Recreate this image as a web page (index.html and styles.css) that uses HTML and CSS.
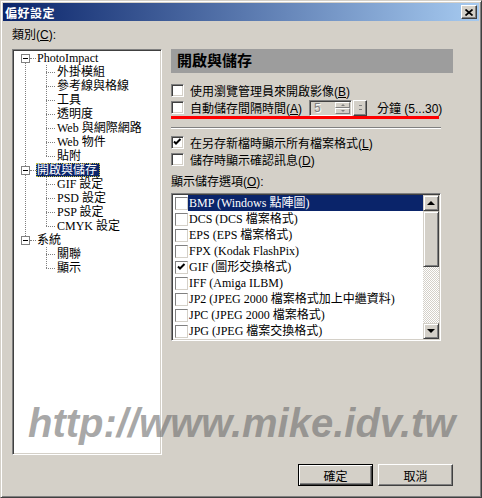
FILE: index.html
```html
<!DOCTYPE html>
<html>
<head>
    <title>偏好設定</title>
    <link rel="stylesheet" href="styles.css">
</head>
<body>
    <div class="window">
        <div class="titlebar">
            <span class="title">偏好設定</span>
            <span class="close-btn">
                <svg width="8" height="7" viewBox="0 0 8 7"><path d="M0.5 0.5L7.5 6.5M7.5 0.5L0.5 6.5" stroke="#000" stroke-width="1.7"/></svg>
            </span>
        </div>

        <div class="dialog-body">
            <div class="field-label">類別(<u>C</u>):</div>

            <div class="main">
                <div class="tree">
                    <div class="group">
                        <div class="node"><span class="exp"></span><span class="hline"></span><span class="node-text">PhotoImpact</span></div>
                        <div class="children">
                            <div class="leaf"><span class="hline"></span><span class="leaf-text">外掛模組</span></div>
                            <div class="leaf"><span class="hline"></span><span class="leaf-text">參考線與格線</span></div>
                            <div class="leaf"><span class="hline"></span><span class="leaf-text">工具</span></div>
                            <div class="leaf"><span class="hline"></span><span class="leaf-text">透明度</span></div>
                            <div class="leaf"><span class="hline"></span><span class="leaf-text">Web 與網際網路</span></div>
                            <div class="leaf"><span class="hline"></span><span class="leaf-text">Web 物件</span></div>
                            <div class="leaf"><span class="hline"></span><span class="leaf-text">貼附</span></div>
                        </div>
                    </div>
                    <div class="group">
                        <div class="node"><span class="exp"></span><span class="hline"></span><span class="node-text selected">開啟與儲存</span></div>
                        <div class="children">
                            <div class="leaf"><span class="hline"></span><span class="leaf-text">GIF 設定</span></div>
                            <div class="leaf"><span class="hline"></span><span class="leaf-text">PSD 設定</span></div>
                            <div class="leaf"><span class="hline"></span><span class="leaf-text">PSP 設定</span></div>
                            <div class="leaf"><span class="hline"></span><span class="leaf-text">CMYK 設定</span></div>
                        </div>
                    </div>
                    <div class="group">
                        <div class="node"><span class="exp"></span><span class="hline"></span><span class="node-text">系統</span></div>
                        <div class="children">
                            <div class="leaf"><span class="hline"></span><span class="leaf-text">關聯</span></div>
                            <div class="leaf"><span class="hline"></span><span class="leaf-text">顯示</span></div>
                        </div>
                    </div>
                </div>

                <div class="panel">
                    <div class="panel-header">開啟與儲存</div>

                    <div class="opt opt-first">
                        <span class="check"></span>
                        <span>使用瀏覽管理員來開啟影像(<u>B</u>)</span>
                    </div>
                    <div class="opt opt-spin">
                        <span class="check"></span>
                        <span class="spin-label">自動儲存間隔時間(<u>A</u>)</span>
                        <span class="spin">
                            <span class="spin-val">5</span>
                            <span class="updown">
                                <span class="ud-btn"><span class="tri-up small"></span></span>
                                <span class="ud-btn"><span class="tri-down small"></span></span>
                            </span>
                        </span>
                        <span class="spin-extra"><span class="mini-mark"></span></span>
                        <span class="unit">分鐘 (5...30)</span>
                    </div>
                    <div class="redline"></div>
                    <div class="sep"></div>
                    <div class="opt opt-third">
                        <span class="check">
                            <svg width="9" height="9" viewBox="0 0 9 9"><path d="M1 3.5L3 5.5L7.5 1" fill="none" stroke="#000" stroke-width="2"/></svg>
                        </span>
                        <span>在另存新檔時顯示所有檔案格式(<u>L</u>)</span>
                    </div>
                    <div class="opt">
                        <span class="check"></span>
                        <span>儲存時顯示確認訊息(<u>D</u>)</span>
                    </div>
                    <div class="list-label">顯示儲存選項(<u>O</u>):</div>

                    <div class="list">
                        <div class="items">
                            <div class="item"><span class="lcheck"></span><span class="item-text selected">BMP (Windows 點陣圖)</span></div>
                            <div class="item"><span class="lcheck"></span><span class="item-text">DCS (DCS 檔案格式)</span></div>
                            <div class="item"><span class="lcheck"></span><span class="item-text">EPS (EPS 檔案格式)</span></div>
                            <div class="item"><span class="lcheck"></span><span class="item-text">FPX (Kodak FlashPix)</span></div>
                            <div class="item"><span class="lcheck"><svg width="9" height="9" viewBox="0 0 9 9"><path d="M1 3.5L3 5.5L7.5 1" fill="none" stroke="#000" stroke-width="2"/></svg></span><span class="item-text">GIF (圖形交換格式)</span></div>
                            <div class="item"><span class="lcheck"></span><span class="item-text">IFF (Amiga ILBM)</span></div>
                            <div class="item"><span class="lcheck"></span><span class="item-text">JP2 (JPEG 2000 檔案格式加上中繼資料)</span></div>
                            <div class="item"><span class="lcheck"></span><span class="item-text">JPC (JPEG 2000 檔案格式)</span></div>
                            <div class="item"><span class="lcheck"></span><span class="item-text">JPG (JPEG 檔案交換格式)</span></div>
                        </div>
                        <div class="scrollbar">
                            <span class="sb-btn"><span class="tri-up"></span></span>
                            <span class="thumb"></span>
                            <span class="track"></span>
                            <span class="sb-btn"><span class="tri-down"></span></span>
                        </div>
                    </div>
                </div>
            </div>

            <div class="buttons">
                <button class="btn btn-default">確定</button>
                <button class="btn">取消</button>
            </div>
        </div>

        <div class="watermark">http://www.mike.idv.tw</div>
    </div>
</body>
</html>
```

FILE: styles.css
```css
* {
    box-sizing: border-box;
}

body {
    margin: 0;
    font-family: "Liberation Sans", "Noto Sans CJK TC", sans-serif;
    font-size: 12px;
    color: #000;
}

.window {
    position: relative;
    width: 482px;
    height: 498px;
    background: #d4d0c8;
    border: 1px solid;
    border-color: #d4d0c8 #404040 #404040 #d4d0c8;
    box-shadow: inset 1px 1px #fff, inset -1px -1px #808080;
    padding: 2px;
}

/* title bar */
.titlebar {
    height: 18px;
    display: flex;
    align-items: center;
    justify-content: space-between;
    padding: 0 2px;
    background: linear-gradient(to right, #0a246a, #a6caf0);
    color: #fff;
}

.title {
    font-weight: bold;
    font-size: 12px;
    letter-spacing: 0.5px;
}

.close-btn {
    width: 16px;
    height: 14px;
    display: flex;
    align-items: center;
    justify-content: center;
    background: #d4d0c8;
    border: 1px solid;
    border-color: #fff #404040 #404040 #fff;
    box-shadow: inset -1px -1px #808080;
}

/* body */
.dialog-body {
    padding: 7px 26px 0 9px;
}

.field-label {
    height: 14px;
    line-height: 14px;
    margin-bottom: 7px;
}

.main {
    display: grid;
    grid-template-columns: 150px 282px;
    column-gap: 9px;
    height: 406px;
}

/* tree */
.tree {
    background: #fff;
    border: 1px solid;
    border-color: #808080 #fff #fff #808080;
    box-shadow: inset 1px 1px #404040, inset -1px -1px #d4d0c8;
    padding: 1px;
    font-family: "Liberation Serif", "Noto Sans CJK TC", serif;
    font-size: 12px;
}

.group {
    position: relative;
}

.group:not(:last-child)::before {
    content: '';
    position: absolute;
    left: 11px;
    top: 7px;
    bottom: -7px;
    border-left: 1px dotted #808080;
}

.node {
    display: flex;
    align-items: center;
    height: 14px;
    padding-left: 7px;
}

.exp {
    position: relative;
    z-index: 1;
    width: 9px;
    height: 9px;
    border: 1px solid #808080;
    background: #fff;
}

.exp::after {
    content: '';
    position: absolute;
    left: 1px;
    top: 3px;
    width: 5px;
    height: 1px;
    background: #000;
}

.hline {
    height: 0;
    border-top: 1px dotted #808080;
}

.node .hline {
    width: 6px;
}

.node-text {
    padding: 0 3px 0 1px;
    line-height: 14px;
}

.selected {
    background: #0a246a;
    color: #fff;
    outline: 1px dotted #c8c040;
    outline-offset: -1px;
}

.children {
    position: relative;
}

.children::before {
    content: '';
    position: absolute;
    left: 32px;
    top: 0;
    bottom: 7px;
    border-left: 1px dotted #808080;
}

.leaf {
    display: flex;
    align-items: center;
    height: 14px;
    padding-left: 32px;
}

.leaf .hline {
    width: 9px;
}

.leaf-text {
    margin-left: 2px;
    line-height: 14px;
}

/* right panel */
.panel-header {
    height: 24px;
    line-height: 24px;
    padding-left: 6px;
    background: #9d9d9d;
    font-size: 15px;
    font-weight: bold;
}

.opt {
    display: flex;
    align-items: center;
    gap: 6px;
    height: 16px;
    margin-top: 1px;
}

.opt-first {
    margin-top: 9px;
}

.opt-spin {
    height: 17px;
    gap: 0;
}

.opt-spin .spin-label {
    width: 113px;
    margin-left: 6px;
    margin-right: 6px;
}

.opt-third {
    margin-top: 5px;
}

.check {
    width: 13px;
    height: 13px;
    flex: none;
    display: flex;
    align-items: center;
    justify-content: center;
    background: #fff;
    border: 1px solid;
    border-color: #808080 #fff #fff #808080;
    box-shadow: inset 1px 1px #404040, inset -1px -1px #d4d0c8;
}

.spin {
    display: flex;
    width: 43px;
    height: 16px;
    border: 1px solid;
    border-color: #808080 #fff #fff #808080;
    box-shadow: inset 1px 1px #404040, inset -1px -1px #d4d0c8;
    padding: 1px;
    background: #d4d0c8;
}

.spin-val {
    flex: 1;
    padding-left: 3px;
    line-height: 12px;
    color: #808080;
    text-shadow: 1px 1px #fff;
}

.updown {
    width: 15px;
    display: flex;
    flex-direction: column;
}

.ud-btn {
    flex: 1;
    display: flex;
    align-items: center;
    justify-content: center;
    border: 1px solid;
    border-color: #fff #808080 #808080 #fff;
}

.spin-extra {
    width: 14px;
    height: 16px;
    margin-left: 1px;
    display: flex;
    align-items: center;
    justify-content: center;
    border: 1px solid;
    border-color: #fff #404040 #404040 #fff;
    box-shadow: inset -1px -1px #808080;
}

.mini-mark {
    width: 3px;
    height: 5px;
    border-top: 1px solid #808080;
    border-bottom: 1px solid #808080;
}

.unit {
    margin-left: 10px;
}

.tri-up,
.tri-down {
    width: 0;
    height: 0;
    border-left: 4px solid transparent;
    border-right: 4px solid transparent;
}

.tri-up {
    border-bottom: 4px solid #000;
}

.tri-down {
    border-top: 4px solid #000;
}

.tri-up.small {
    border-width: 0 2px 2px;
    border-bottom-color: #808080;
}

.tri-down.small {
    border-width: 2px 2px 0;
    border-top-color: #808080;
}

.redline {
    width: 268px;
    height: 3px;
    background: #f00;
}

.sep {
    width: 270px;
    margin-top: 8px;
    border-top: 1px solid #808080;
    border-bottom: 1px solid #fff;
}

.list-label {
    height: 14px;
    line-height: 14px;
    margin-top: 8px;
}

/* list */
.list {
    display: flex;
    width: 270px;
    height: 148px;
    margin-top: 4px;
    background: #fff;
    border: 1px solid;
    border-color: #808080 #fff #fff #808080;
    box-shadow: inset 1px 1px #404040, inset -1px -1px #d4d0c8;
    padding: 1px;
    font-family: "Liberation Serif", "Noto Sans CJK TC", serif;
}

.items {
    flex: 1;
    overflow: hidden;
}

.item {
    display: flex;
    align-items: center;
    height: 16px;
    white-space: nowrap;
}

.lcheck {
    width: 13px;
    height: 13px;
    flex: none;
    margin-left: 2px;
    display: flex;
    align-items: center;
    justify-content: center;
    border: 1px solid;
    border-color: #808080 #d4d0c8 #d4d0c8 #808080;
}

.item-text {
    flex: 1;
    height: 16px;
    line-height: 16px;
    padding-left: 1px;
}

.item-text.selected {
    outline: none;
}

.scrollbar {
    width: 16px;
    display: flex;
    flex-direction: column;
}

.sb-btn,
.thumb {
    background: #d4d0c8;
    border: 1px solid;
    border-color: #d4d0c8 #404040 #404040 #d4d0c8;
    box-shadow: inset 1px 1px #fff, inset -1px -1px #808080;
}

.sb-btn {
    height: 16px;
    display: flex;
    align-items: center;
    justify-content: center;
}

.thumb {
    height: 56px;
}

.track {
    flex: 1;
    background: repeating-conic-gradient(#fff 0 25%, #d4d0c8 0 50%) 0 0 / 2px 2px;
}

/* buttons */
.buttons {
    display: flex;
    justify-content: flex-end;
    gap: 5px;
    margin-top: 9px;
}

.btn {
    width: 75px;
    height: 22px;
    padding: 0;
    font-family: "Liberation Sans", "Noto Sans CJK TC", sans-serif;
    font-size: 12px;
    color: #000;
    background: #d4d0c8;
    border: 1px solid;
    border-color: #fff #404040 #404040 #fff;
    box-shadow: inset -1px -1px #808080;
}

.btn-default {
    border-color: #000;
    box-shadow: inset 1px 1px #fff, inset -1px -1px #404040, inset -2px -2px #808080;
}

.watermark {
    position: absolute;
    left: 27px;
    top: 402px;
    font: italic bold 40px/40px "Liberation Sans", sans-serif;
    color: rgba(110, 110, 110, 0.6);
    white-space: nowrap;
    pointer-events: none;
}
```
